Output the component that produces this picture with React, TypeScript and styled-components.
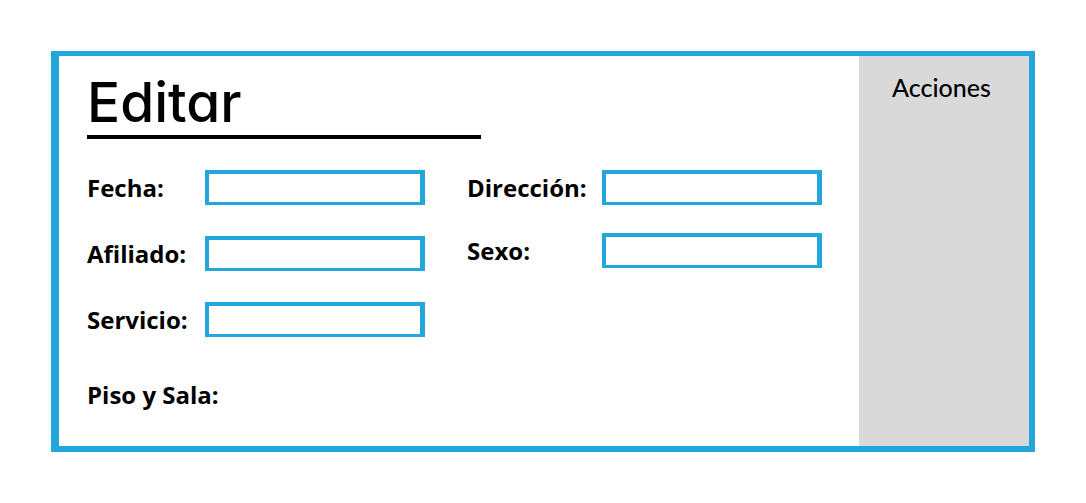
import React, { useId } from 'react';
import styled, { createGlobalStyle } from 'styled-components';

const GlobalStyle = createGlobalStyle`
  *, *::before, *::after {
    box-sizing: border-box;
  }
  body {
    margin: 0;
    background: #ffffff;
    color: #000000;
    font-family: 'Open Sans', 'Noto Sans', sans-serif;
  }
`;

const Page = styled.div`
  padding: 51px;
`;

const Card = styled.div`
  display: flex;
  border: solid #22a6db;
  border-width: 5px 6px 6px 8px;
`;

const Main = styled.main`
  flex: 1;
  min-width: 0;
  padding: 16px 28px 34px;
`;

const Title = styled.h1`
  width: 394px;
  max-width: 100%;
  margin: 0 0 31px;
  padding-bottom: 3px;
  border-bottom: 4px solid #000000;
  font-family: Inter, Lato, sans-serif;
  font-feature-settings: 'cv11';
  font-size: 55px;
  font-weight: 500;
  line-height: 60px;
`;

const Columns = styled.form`
  display: flex;
  align-items: flex-start;
  flex-wrap: wrap;
  gap: 42px;
`;

const Column = styled.div<{ $gap: number }>`
  display: flex;
  flex-direction: column;
  gap: ${({ $gap }) => $gap}px;
`;

const Row = styled.div<{ $labelWidth: number }>`
  display: grid;
  grid-template-columns: ${({ $labelWidth }) => $labelWidth}px 220px;
  align-items: center;
`;

const Label = styled.label`
  font-size: 24px;
  font-weight: 700;
  line-height: 34px;
  white-space: nowrap;
`;

const Input = styled.input`
  width: 100%;
  height: 35px;
  margin: 0;
  padding: 0 8px;
  border: solid #22a6db;
  border-width: 4px 5px 3px 4px;
  border-radius: 0;
  background: #ffffff;
  font: inherit;
  font-size: 16px;
`;

const Section = styled.h2`
  margin: 41px 0 0;
  font-size: 24px;
  font-weight: 700;
  line-height: 34px;
`;

const Actions = styled.aside`
  flex: 0 0 170px;
  padding: 14px 0;
  background: #d9d9d9;
  text-align: center;
`;

const ActionsTitle = styled.h2`
  margin: 0;
  padding-right: 5px;
  font-family: Lato, sans-serif;
  font-size: 25px;
  font-weight: 500;
  line-height: 34px;
`;

function Field({ label, labelWidth }: { label: string; labelWidth: number }) {
  const id = useId();
  return (
    <Row $labelWidth={labelWidth}>
      <Label htmlFor={id}>{label}</Label>
      <Input id={id} type="text" />
    </Row>
  );
}

export default function App() {
  return (
    <>
      <GlobalStyle />
      <Page>
        <Card>
          <Main>
            <Title>Editar</Title>
            <Columns>
              <Column $gap={31}>
                <Field label="Fecha:" labelWidth={118} />
                <Field label="Afiliado:" labelWidth={118} />
                <Field label="Servicio:" labelWidth={118} />
              </Column>
              <Column $gap={28}>
                <Field label="Dirección:" labelWidth={135} />
                <Field label="Sexo:" labelWidth={135} />
              </Column>
            </Columns>
            <Section>Piso y Sala:</Section>
          </Main>
          <Actions>
            <ActionsTitle>Acciones</ActionsTitle>
          </Actions>
        </Card>
      </Page>
    </>
  );
}
